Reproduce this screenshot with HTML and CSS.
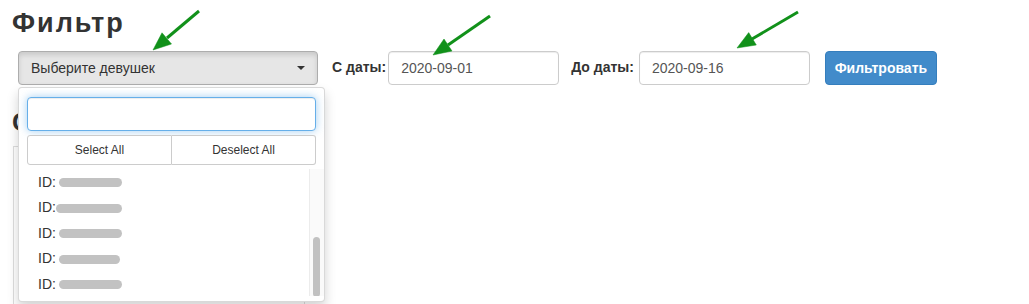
FILE: index.html
```html
<!DOCTYPE html>
<html lang="ru">
<head>
    <meta charset="UTF-8">
    <meta name="viewport" content="width=device-width, initial-scale=1.0">
    <title>Фильтр</title>
    <link rel="stylesheet" href="styles.css">
</head>
<body>
    <div class="page">
        <h1>Фильтр</h1>

        <form class="filter-row">
            <div class="select-wrap">
                <button type="button" class="select-btn">
                    <span>Выберите девушек</span>
                    <span class="caret"></span>
                </button>

                <div class="dropdown">
                    <div class="searchbox">
                        <input type="text" class="search-input">
                    </div>
                    <div class="actions">
                        <button type="button">Select All</button>
                        <button type="button">Deselect All</button>
                    </div>
                    <div class="list-wrap">
                        <ul class="list">
                            <li>ID: <span class="blur" style="width: 63px"></span></li>
                            <li>ID: <span class="blur wide" style="width: 66px"></span></li>
                            <li>ID: <span class="blur" style="width: 63px"></span></li>
                            <li>ID: <span class="blur" style="width: 61px"></span></li>
                            <li>ID: <span class="blur" style="width: 63px"></span></li>
                        </ul>
                        <div class="scroll-track">
                            <div class="scroll-thumb"></div>
                        </div>
                    </div>
                </div>
            </div>

            <label class="field-label">С даты:</label>
            <input type="text" class="date-input" value="2020-09-01">

            <label class="field-label to">До даты:</label>
            <input type="text" class="date-input" value="2020-09-16">

            <button type="button" class="btn-primary">Фильтровать</button>
        </form>

        <h2>Статистика</h2>
        <div class="table-box"></div>
    </div>

    <!-- annotation arrows -->
    <svg class="arrows" width="1029" height="304" viewBox="0 0 1029 304">
        <g fill="#11911a" stroke="#11911a">
            <line x1="199" y1="11" x2="167" y2="38" stroke-width="3"/>
            <polygon points="153,50 171.5,44 162,32.8" stroke-width="0.5"/>

            <line x1="490" y1="16" x2="448" y2="45" stroke-width="3"/>
            <polygon points="433,55 452,51 444,39" stroke-width="0.5"/>

            <line x1="798" y1="12" x2="752" y2="39" stroke-width="3"/>
            <polygon points="737,48 756.3,45 748.7,32.6" stroke-width="0.5"/>
        </g>
    </svg>
</body>
</html>
```

FILE: styles.css
```css
html, body {
    overflow: hidden;
}
body {
    margin: 0;
    background: #fff;
    color: #333;
    font-family: "Liberation Sans", Arial, sans-serif;
    font-size: 14px;
    line-height: 1.42857;
}
.page {
    padding: 10px 12px 0;
}
h1, h2 {
    font-size: 26px;
    font-weight: bold;
    line-height: 26px;
    color: #333;
}
h1 {
    margin: 0 0 15px;
    font-size: 27px;
    letter-spacing: 2px;
}
h2 {
    margin: 24px 0 11px;
}
.filter-row {
    display: flex;
    align-items: center;
    margin-left: 6px;
    height: 34px;
}
.select-wrap {
    position: relative;
}
.select-btn {
    display: flex;
    align-items: center;
    justify-content: space-between;
    width: 300px;
    height: 34px;
    padding: 0 12px;
    background: #e6e6e6;
    border: 1px solid #adadad;
    border-radius: 4px;
    box-shadow: inset 0 3px 5px rgba(0,0,0,0.125);
    color: #333;
    font-family: inherit;
    font-size: 14px;
}
.caret {
    width: 0;
    height: 0;
    border-top: 4px solid #333;
    border-left: 4px solid transparent;
    border-right: 4px solid transparent;
}
.field-label {
    font-weight: bold;
    margin: 0 2px 0 14px;
}
.field-label.to {
    margin: 0 5px 0 12px;
}
.date-input {
    box-sizing: border-box;
    width: 171px;
    height: 34px;
    padding: 6px 12px;
    border: 1px solid #ccc;
    border-radius: 4px;
    box-shadow: inset 0 1px 1px rgba(0,0,0,0.075);
    color: #555;
    font-family: inherit;
    font-size: 14px;
}
.btn-primary {
    margin-left: 15px;
    width: 112px;
    height: 34px;
    padding: 0;
    background: #428bca;
    border: 1px solid #357ebd;
    border-radius: 4px;
    color: #fff;
    font-family: inherit;
    font-size: 14px;
    font-weight: bold;
}

/* open select menu */
.dropdown {
    position: absolute;
    top: calc(100% + 2px);
    left: 0;
    z-index: 10;
    box-sizing: border-box;
    width: 307px;
    height: 215px;
    padding: 5px 0;
    background: #fff;
    border: 1px solid rgba(0,0,0,0.15);
    border-radius: 4px;
    box-shadow: 0 6px 12px rgba(0,0,0,0.175);
}
.searchbox {
    padding: 4px 8px;
}
.search-input {
    display: block;
    box-sizing: border-box;
    width: 100%;
    height: 34px;
    border: 1px solid #66afe9;
    border-radius: 4px;
    outline: none;
    box-shadow: inset 0 1px 1px rgba(0,0,0,0.075), 0 0 8px rgba(102,175,233,0.6);
}
.actions {
    display: flex;
    padding: 0 8px 4px;
}
.actions button {
    flex: 1;
    height: 30px;
    background: #fff;
    border: 1px solid #ccc;
    color: #333;
    font-family: inherit;
    font-size: 12px;
}
.actions button:first-child {
    border-radius: 3px 0 0 3px;
}
.actions button:last-child {
    border-left: none;
    border-radius: 0 3px 3px 0;
}
.list-wrap {
    display: flex;
    height: 127px;
    overflow: hidden;
}
.list {
    flex: 1;
    margin: 0;
    padding: 1px 0 0;
    list-style: none;
}
.list li {
    display: flex;
    align-items: center;
    height: 25.5px;
    padding: 0 19px;
}
.blur {
    display: inline-block;
    height: 9px;
    margin-left: 3px;
    border-radius: 5px;
    background: #c2c2c2;
}
.blur.wide {
    margin-left: 0;
}
.scroll-track {
    width: 14px;
    background: #fafafa;
    border-left: 1px solid #ececec;
}
.scroll-thumb {
    width: 7px;
    height: 60px;
    margin: 68px 0 0 3px;
    border-radius: 4px;
    background: #c1c1c1;
}

.table-box {
    width: 290px;
    height: 200px;
    margin-left: 1px;
    border: 1px solid #ddd;
}
.arrows {
    position: absolute;
    top: 0;
    left: 0;
    pointer-events: none;
    z-index: 20;
}
```
